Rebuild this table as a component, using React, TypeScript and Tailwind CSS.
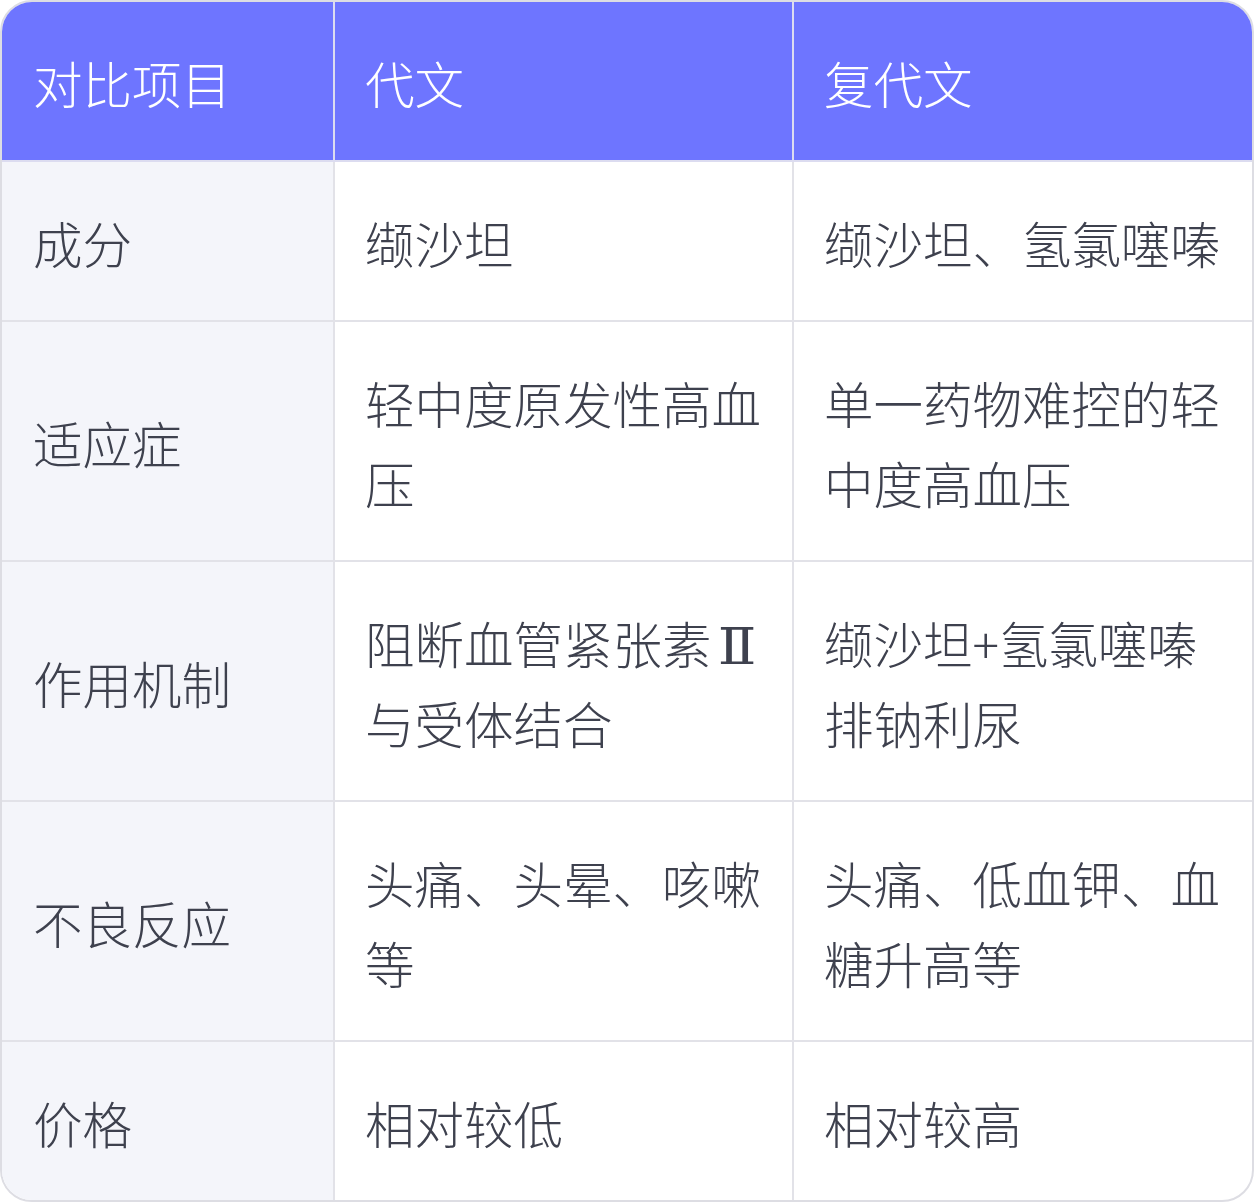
import React from 'react';

const rows: Array<[string, React.ReactNode, string]> = [
  ['成分', '缬沙坦', '缬沙坦、氢氯噻嗪'],
  ['适应症', '轻中度原发性高血压', '单一药物难控的轻中度高血压'],
  [
    '作用机制',
    <>
      阻断血管紧张素
      <span
        className="inline-block leading-none pl-[8px] pr-[5px] scale-x-[1.15] font-extralight"
        style={{ fontFamily: '"DejaVu Serif", serif' }}
      >
        Ⅱ
      </span>
      与受体结合
    </>,
    '缬沙坦+氢氯噻嗪排钠利尿',
  ],
  ['不良反应', '头痛、头晕、咳嗽等', '头痛、低血钾、血糖升高等'],
  ['价格', '相对较低', '相对较高'],
];

const App: React.FC = () => {
  return (
    <div
      className="w-[1254px] h-[1204px] bg-white"
      style={{ fontFamily: '"Noto Sans CJK SC", "Noto Sans", sans-serif' }}
    >
      <div className="rounded-[32px] border-2 border-[#dddde3] overflow-hidden text-[49.5px] leading-[80px] font-light">
        {/* Header */}
        <div className="grid grid-cols-[333px_459px_1fr] bg-[#6e75ff] text-white">
          <div className="pl-[31px] pr-[20px] pt-[41px] pb-[37px] border-r-2 border-b-2 border-[#dcdcf0]">对比项目</div>
          <div className="pl-[30px] pr-[20px] pt-[41px] pb-[37px] border-r-2 border-b-2 border-[#dcdcf0]">代文</div>
          <div className="pl-[30px] pr-[20px] pt-[41px] pb-[37px] border-b-2 border-[#dcdcf0]">复代文</div>
        </div>

        {/* Body */}
        {rows.map((row, i) => {
          const last = i === rows.length - 1;
          const bb = last ? '' : 'border-b-2';
          return (
            <div key={row[0]} className="grid grid-cols-[333px_459px_1fr] text-[#3e414e]">
              <div className={`flex items-center pl-[31px] pr-[20px] pt-[41px] pb-[37px] bg-[#f4f5fa] border-r-2 border-[#e2e2e8] ${bb}`}>
                {row[0]}
              </div>
              <div className={`pl-[30px] pr-[20px] pt-[41px] pb-[37px] border-r-2 border-[#e2e2e8] ${bb}`}>{row[1]}</div>
              <div className={`pl-[30px] pr-[20px] pt-[41px] pb-[37px] border-[#e2e2e8] ${bb}`}>{row[2]}</div>
            </div>
          );
        })}
      </div>
    </div>
  );
};

export default App;
